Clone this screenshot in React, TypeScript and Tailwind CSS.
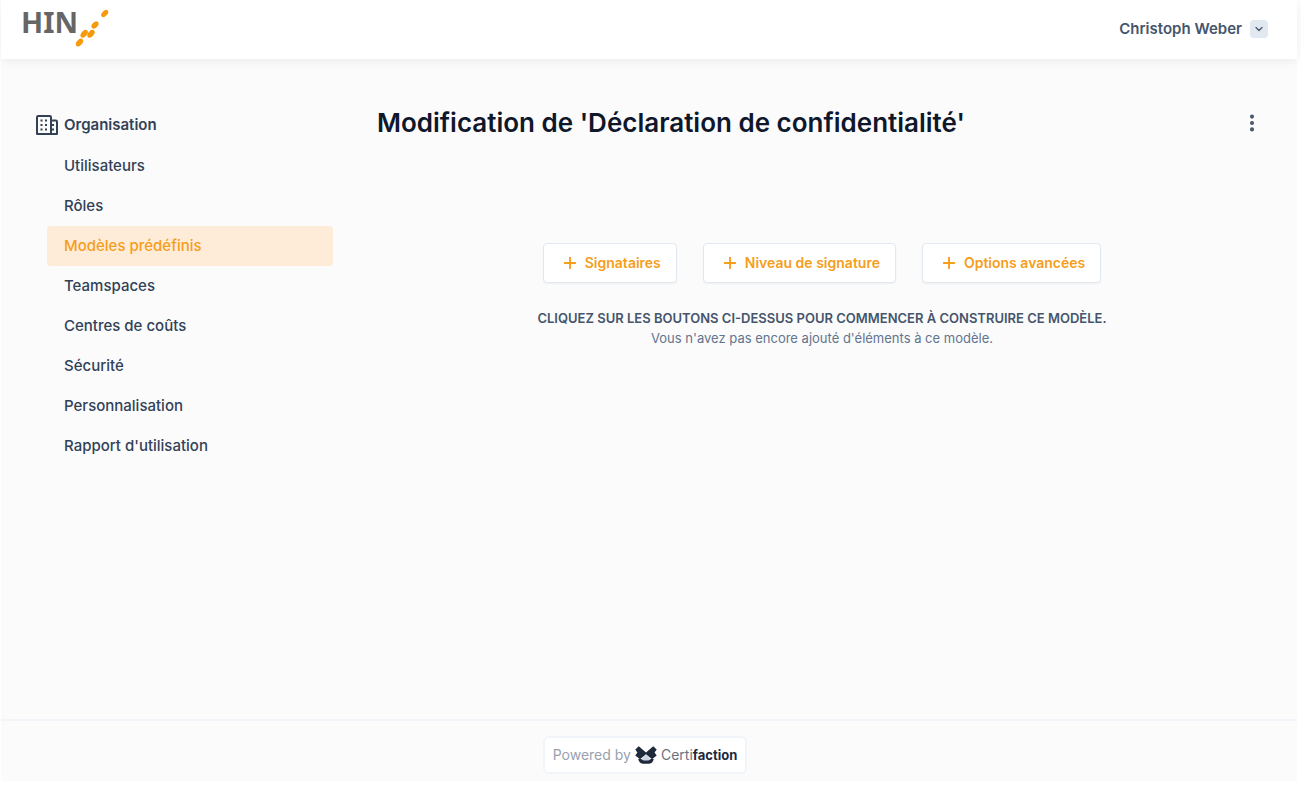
import { ChevronDown, EllipsisVertical, Plus } from 'lucide-react'
import { useState } from 'react'

const navItems = [
  'Utilisateurs',
  'Rôles',
  'Modèles prédéfinis',
  'Teamspaces',
  'Centres de coûts',
  'Sécurité',
  'Personnalisation',
  "Rapport d'utilisation",
]

const elements = ['Signataires', 'Niveau de signature', 'Options avancées']

function HinLogo() {
  return (
    <svg width="92" height="48" viewBox="0 0 92 48" role="img" aria-label="HIN">
      <text x="0" y="31" fill="#666666" fontSize="29" fontWeight="700" fontFamily="'Noto Sans', sans-serif">
        HIN
      </text>
      <g fill="#f59a0c">
        <ellipse cx="58.5" cy="40.5" rx="4.5" ry="2.8" transform="rotate(-50 58.5 40.5)" />
        <ellipse cx="63.2" cy="31.7" rx="4.5" ry="2.8" transform="rotate(-50 63.2 31.7)" />
        <ellipse cx="70" cy="31.7" rx="4.5" ry="2.8" transform="rotate(-50 70 31.7)" />
        <ellipse cx="74" cy="23" rx="4.2" ry="2.7" transform="rotate(-45 74 23)" />
        <ellipse cx="83.7" cy="11.5" rx="4.2" ry="2.6" transform="rotate(-45 83.7 11.5)" />
      </g>
    </svg>
  )
}

function BuildingIcon() {
  return (
    <svg width="22" height="20" viewBox="0 0 22 20" fill="none" stroke="#334155" strokeWidth="2" aria-hidden="true">
      <path d="M1 19V2.2Q1 1 2.2 1H13.8Q15 1 15 2.2V19Z" strokeLinejoin="round" />
      <path d="M15 5.5H19.8Q21 5.5 21 6.7V19H15" strokeLinejoin="round" />
      <path d="M4.5 5.5h2M9 5.5h2M4.5 10h2M9 10h2M4.5 14.5h2M9 14.5h2M16 10h2M16 14.5h2" />
    </svg>
  )
}

function CertifactionIcon() {
  return (
    <svg width="22" height="18" viewBox="0 0 22 18" fill="#1e293b" aria-hidden="true">
      <path d="M3.8.3 11 6.4 18.2.3 21.7 3.6 19.6 6.4 21.7 9.6 17 13.2 11 8.2 5 13.2.3 9.6 2.4 6.4.3 3.6Z" />
      <path d="M3.2 13H18.8Q17.6 17.8 14 17.8H8Q4.4 17.8 3.2 13Z" />
      <path d="M11 8.4 15.6 13.6 13.4 14.6H8.6L6.4 13.6Z" fill="#cbd5e1" />
    </svg>
  )
}

export default function App() {
  const [active, setActive] = useState('Modèles prédéfinis')

  return (
    <div className="flex min-h-screen flex-col bg-white pr-1 pb-1 pl-px font-['Inter',sans-serif] text-slate-700">
      {/* Top bar */}
      <header className="flex h-[59px] items-center justify-between bg-white pr-[29px] pl-5 shadow-[0_1px_10px_0_rgba(15,23,42,0.08)] relative">
        <a href="#" className="-mt-2">
          <HinLogo />
        </a>
        <button type="button" className="-mt-px flex items-center gap-2 text-[15px] font-semibold text-slate-600">
          Christoph Weber
          <span className="flex size-[18px] items-center justify-center rounded-sm bg-slate-200">
            <ChevronDown size={12} strokeWidth={2.5} />
          </span>
        </button>
      </header>

      <div className="flex flex-1 bg-[#fbfbfb] pt-12 pr-[30px] pl-[35px]">
        {/* Sidebar */}
        <nav className="w-[297px] shrink-0 text-[15px]">
          <a href="#" className="flex h-9 items-center gap-1.5 font-semibold">
            <BuildingIcon />
            Organisation
          </a>
          <ul className="mt-[3px] pl-[11px]">
            {navItems.map((item) => (
              <li key={item}>
                <a
                  href="#"
                  onClick={() => setActive(item)}
                  className={`flex h-10 items-center rounded pl-[17px] font-medium ${
                    item === active ? 'bg-[#ffecd8] text-[#f59e1b]' : ''
                  }`}
                >
                  {item}
                </a>
              </li>
            ))}
          </ul>
        </nav>

        {/* Template editor */}
        <main className="ml-11 flex-1">
          <div className="flex items-center justify-between">
            <h1 className="text-[26px] leading-8 font-semibold text-slate-900">
              Modification de 'Déclaration de confidentialité'
            </h1>
            <button type="button" aria-label="Actions" className="mr-1 text-slate-600">
              <EllipsisVertical size={22} strokeWidth={2.5} />
            </button>
          </div>

          <div className="mt-26 flex justify-center gap-[26px]">
            {elements.map((label) => (
              <button
                key={label}
                type="button"
                className="flex h-10 items-center gap-1.5 rounded border border-slate-200 bg-white pr-[15px] pl-[17px] text-sm font-semibold text-[#f59e1b] shadow-xs"
              >
                <Plus size={18} strokeWidth={2.5} />
                {label}
              </button>
            ))}
          </div>

          <div className="mt-[25px] text-center text-[13px] leading-5">
            <p className="font-semibold text-slate-600 uppercase">
              Cliquez sur les boutons ci-dessus pour commencer à construire ce modèle.
            </p>
            <p className="text-slate-500">Vous n'avez pas encore ajouté d'éléments à ce modèle.</p>
          </div>
        </main>
      </div>

      <footer className="flex h-[62px] items-center justify-center border-t-2 border-slate-100 bg-[#fbfbfb] pt-2 pr-2">
        <a
          href="#"
          className="flex h-[38px] items-center rounded-md border-2 border-slate-100 bg-white px-2 text-[13px] text-gray-400"
        >
          <span className="text-sm">Powered by</span>
          <span className="mx-1">
            <CertifactionIcon />
          </span>
          <span className="text-sm text-gray-500">
            Certi<b className="text-[13px] font-bold text-slate-800">faction</b>
          </span>
        </a>
      </footer>
    </div>
  )
}
